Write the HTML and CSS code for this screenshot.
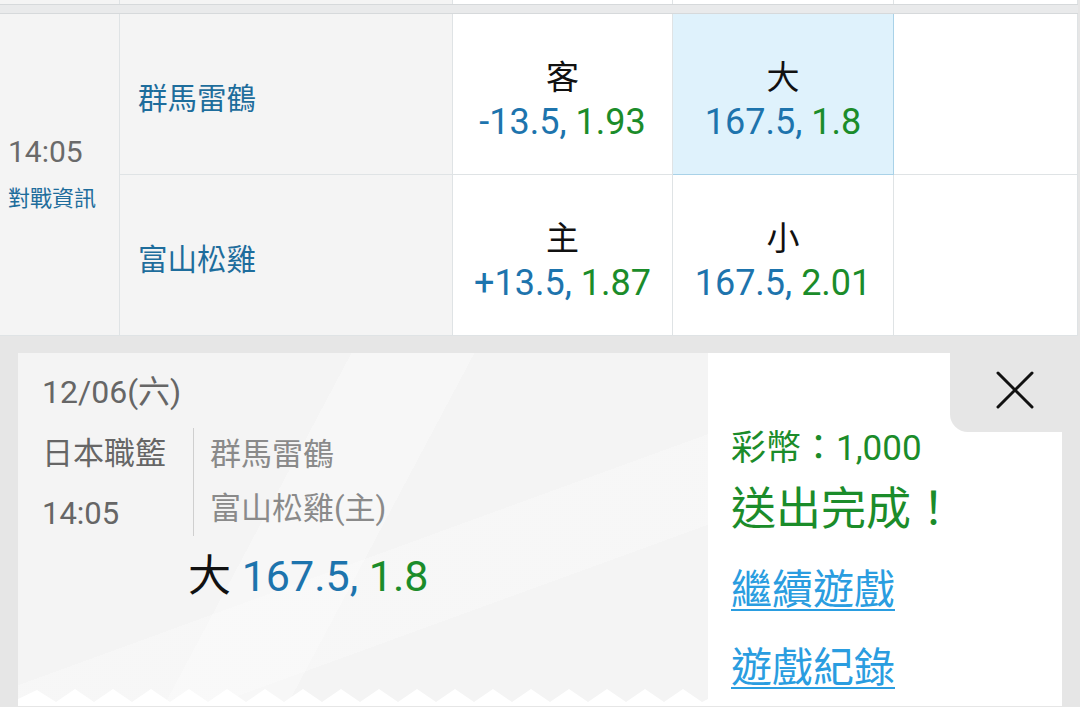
FILE: index.html
```html
<!DOCTYPE html>
<html lang="zh-Hant">
<head>
<meta charset="utf-8">
<title>Bet</title>
<link rel="stylesheet" href="styles.css">
</head>
<body>
<div class="board">
  <div class="prev-row">
    <div class="pc c1"></div><div class="pc c2"></div><div class="pc c3"></div><div class="pc c4"></div><div class="pc c5"></div>
  </div>
  <div class="sep"></div>
  <div class="match">
    <div class="time-cell">
      <div class="time">14:05</div>
      <div class="info">對戰資訊</div>
    </div>
    <div class="team">群馬雷鶴</div>
    <div class="odd"><div class="lbl">客</div><div class="num"><span class="b">-13.5,</span> <span class="g">1.93</span></div></div>
    <div class="odd sel"><div class="lbl">大</div><div class="num"><span class="b">167.5,</span> <span class="g">1.8</span></div></div>
    <div class="odd empty"></div>
    <div class="team">富山松雞</div>
    <div class="odd"><div class="lbl">主</div><div class="num"><span class="b">+13.5,</span> <span class="g">1.87</span></div></div>
    <div class="odd"><div class="lbl">小</div><div class="num"><span class="b">167.5,</span> <span class="g">2.01</span></div></div>
    <div class="odd empty"></div>
  </div>
</div>
<div class="ticket-area">
  <div class="ticket">
    <div class="slip">
      <div class="slip-body">
        <div class="date">12/06(六)</div>
        <div class="meta">
          <div class="league">
            <div>日本職籃</div>
            <div>14:05</div>
          </div>
          <div class="teams">
            <div>群馬雷鶴</div>
            <div>富山松雞(主)</div>
          </div>
        </div>
        <div class="pick">大 <span class="b">167.5,</span> <span class="g">1.8</span></div>
      </div>
      <div class="zigzag">
        <svg width="690" height="17" viewBox="0 0 690 17" preserveAspectRatio="none">
          <polygon fill="#ffffff" points="0,17 0,10 19,1 38,13 57,0 76,13 95,0 114,13 133,0 152,13 171,0 190,13 209,0 228,13 247,0 266,13 285,0 304,13 323,0 342,13 361,0 380,13 399,0 418,13 437,0 456,13 475,0 494,13 513,0 532,13 551,0 570,13 589,0 608,13 627,0 646,13 665,0 684,13 690,10 690,17"/>
        </svg>
      </div>
    </div>
    <div class="result">
      <button class="close" aria-label="close">
        <svg width="38" height="38" viewBox="0 0 38 38"><path d="M2 2 L36 36 M36 2 L2 36" stroke="#111" stroke-width="3" fill="none" stroke-linecap="round"/></svg>
      </button>
      <div class="coins">彩幣：1,000</div>
      <div class="done">送出完成！</div>
      <a class="link first" href="#">繼續遊戲</a>
      <a class="link" href="#">遊戲紀錄</a>
    </div>
  </div>
</div>
</body>
</html>
```
FILE: styles.css
```css
* { box-sizing: border-box; }
html, body { margin: 0; padding: 0; }
body {
  width: 1080px;
  height: 707px;
  overflow: hidden;
  background: #e6e6e6;
  font-family: Roboto, "Noto Sans CJK TC", "Noto Sans", sans-serif;
}
.b { color: #1d74ad; }
.g { color: #1b8c2a; }

.board { width: 1078px; background: #fff; }
.prev-row {
  display: grid;
  grid-template-columns: 120px 333px 220px 221px 184px;
  height: 5px;
  border-bottom: 1px solid #d6d9db;
}
.pc { border-right: 1px solid #dfe3e5; background: #fff; }
.pc.c1, .pc.c2 { background: #f4f4f4; }
.sep {
  height: 9px;
  background: #e9eaeb;
  border-bottom: 1px solid #d6d9db;
}
.match {
  display: grid;
  grid-template-columns: 120px 333px 220px 221px 184px;
  grid-template-rows: 161px 161px;
}
.time-cell {
  grid-row: 1 / span 2;
  background: #f4f4f4;
  border-right: 1px solid #dfe3e5;
  border-bottom: 1px solid #dfe3e5;
  display: flex;
  flex-direction: column;
  justify-content: flex-start;
  padding: 118px 0 0 8px;
}
.time {
  font-size: 30px;
  line-height: 40px;
  color: #6a6a6a;
}
.info {
  font-size: 22px;
  line-height: 40px;
  color: #1e6d9c;
  margin-top: 7px;
}
.team {
  background: #f4f4f4;
  border-right: 1px solid #dfe3e5;
  border-bottom: 1px solid #dfe3e5;
  display: flex;
  align-items: center;
  padding-left: 18px;
  padding-top: 4px;
  font-size: 29.5px;
  color: #1e6d9c;
}
.odd {
  background: #fff;
  border-right: 1px solid #dfe3e5;
  border-bottom: 1px solid #dfe3e5;
  display: flex;
  flex-direction: column;
  justify-content: center;
  align-items: center;
  padding-top: 12px;
}
.odd.sel {
  background: #dff2fc;
  border: 1px solid #a9d2e8;
  border-left: none;
  border-top: none;
}
.lbl {
  font-size: 33px;
  line-height: 45px;
  color: #111;
}
.num {
  font-size: 36px;
  line-height: 45px;
  white-space: nowrap;
}

.ticket-area {
  padding: 17px 18px 0 18px;
}
.ticket {
  display: flex;
  height: 353px;
}
.slip {
  width: 690px;
  display: flex;
  flex-direction: column;
  background:
    linear-gradient(118deg, rgba(255,255,255,0) 0 38%, rgba(255,255,255,0.3) 38% 52%, rgba(255,255,255,0) 52%),
    linear-gradient(160deg, rgba(255,255,255,0) 0 55%, rgba(255,255,255,0.25) 55% 70%, rgba(255,255,255,0) 70%),
    #f4f4f4;
}
.slip-body {
  flex: 1;
  padding: 18px 0 0 24px;
}
.date {
  font-size: 32px;
  line-height: 42px;
  color: #666;
}
.meta {
  display: flex;
  align-items: flex-start;
  margin-top: 15px;
}
.league {
  width: 151px;
  font-size: 31px;
  line-height: 60px;
  color: #666;
  margin-top: -4px;
}
.teams {
  border-left: 1px solid #cfcfcf;
  padding-left: 16px;
  font-size: 31px;
  line-height: 54px;
  color: #8a8a8a;
}
.pick {
  margin: 6px 0 0 146px;
  font-size: 43px;
  line-height: 52px;
  color: #111;
  white-space: nowrap;
}
.zigzag { height: 17px; line-height: 0; }
.zigzag svg { display: block; }

.result {
  position: relative;
  width: 354px;
  background: #fff;
  padding: 74px 0 0 23px;
  display: flex;
  flex-direction: column;
  align-items: flex-start;
}
.close {
  position: absolute;
  top: 0;
  right: 0;
  width: 112px;
  height: 79px;
  background: #e6e6e6;
  border: none;
  border-bottom-left-radius: 18px;
  padding: 0;
  display: flex;
  align-items: center;
  justify-content: center;
  padding-left: 17px;
  padding-bottom: 6px;
}
.close svg { display: block; }
.coins {
  font-size: 35px;
  line-height: 44px;
  color: #1b8c2a;
}
.done {
  font-size: 45px;
  line-height: 62px;
  color: #1b8c2a;
  margin-top: 8px;
}
.link {
  font-size: 41px;
  line-height: 56px;
  color: #2a9de0;
  text-decoration: underline;
  text-decoration-thickness: 2px;
  text-underline-offset: 5px;
  margin-top: 22px;
}
.link.first { margin-top: 21px; }
```
